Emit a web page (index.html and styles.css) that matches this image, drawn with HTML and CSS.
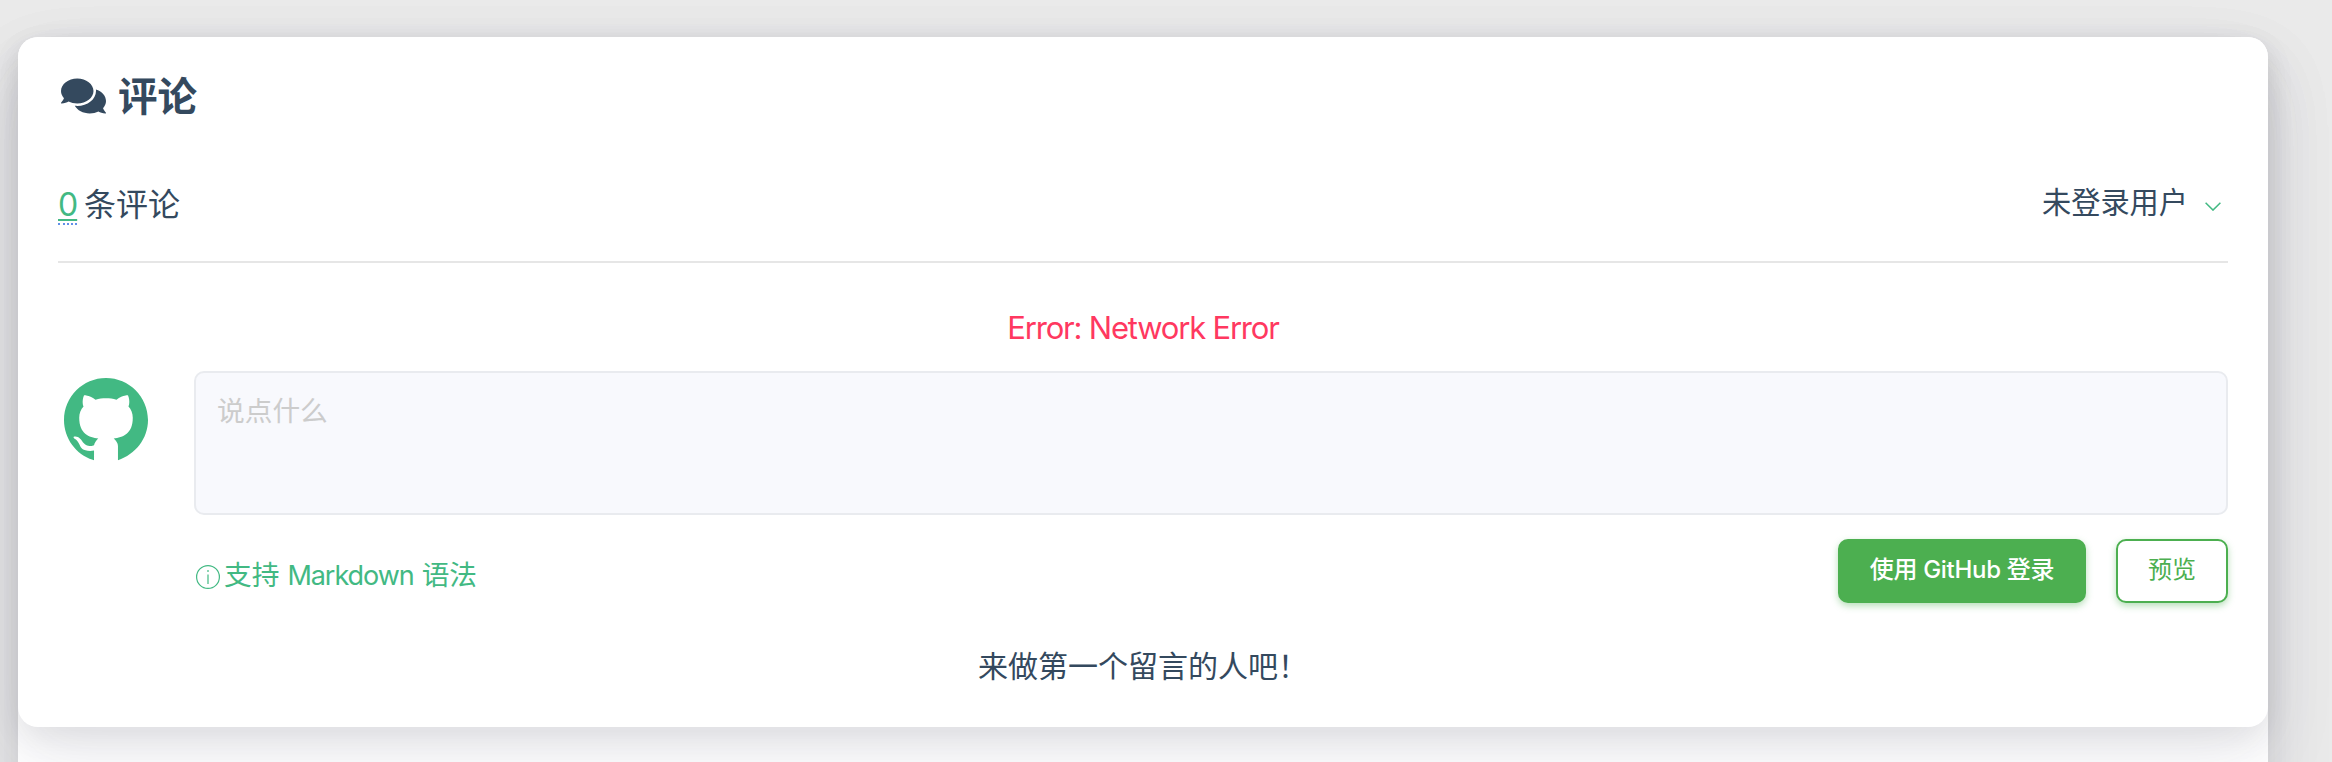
FILE: index.html
```html
<!DOCTYPE html>
<html lang="zh-CN">
<head>
<meta charset="utf-8">
<title>评论</title>
<link rel="stylesheet" href="styles.css">
</head>
<body>
<div class="page">
<main class="article">
  <section class="card">
    <h2 class="title">
      <svg class="title-icon" viewBox="0 0 576 512"><path d="M416 192c0-88.400-93.100-160-208-160S0 103.600 0 192c0 34.300 14.100 65.900 38 92-13.400 30.200-35.500 54.200-35.800 54.500-2.200 2.300-2.800 5.700-1.500 8.700S4.800 352 8 352c36.600 0 66.900-12.300 88.700-25 32.200 15.700 70.300 25 111.300 25 114.900 0 208-71.600 208-160zm122 220c23.900-26 38-57.700 38-92 0-66.900-53.500-124.200-129.300-148.100.9 6.600 1.300 13.300 1.300 20.100 0 105.900-107.700 192-240 192-10.800 0-21.300-.8-31.700-1.900C207.800 439.600 281.800 480 368 480c41 0 79.100-9.200 111.300-25 21.800 12.700 52.100 25 88.700 25 3.200 0 6.100-1.900 7.300-4.800 1.300-2.900.7-6.300-1.500-8.700-.3-.3-22.400-24.200-35.800-54.500z"/></svg>
      <span class="title-text">评论</span>
    </h2>
    <div class="meta">
      <div class="counts"><a class="count">0</a><span>条评论</span></div>
      <div class="user">
        <span class="user-name">未登录用户</span>
        <svg class="arrow" viewBox="0 0 16 9"><path d="M.6.7 8 8.100 15.400.7"/></svg>
      </div>
    </div>
    <div class="error">Error: Network Error</div>
    <div class="editor">
      <svg class="avatar" viewBox="0 0 16 16"><path d="M8 0C3.580 0 0 3.580 0 8c0 3.540 2.290 6.530 5.470 7.590l.25.060V13.830c-2.030.27-2.550-.59-2.710-1.040-.09-.23-.48-.94-.82-1.130-.28-.15-.68-.52-.01-.53.63-.01 1.080.58 1.230.82.72 1.210 1.850 1.080 2.310.87.070-.52.590-1.080.820-1.280-1.780-.2-3.640-.89-3.640-3.950 0-.87.310-1.590.82-2.150-.08-.2-.36-1.020.08-2.120 0 0 .67-.21 2.200.82.64-.18 1.320-.27 2-.27s1.360.09 2 .27c1.530-1.040 2.200-.82 2.200-.82.44 1.100.16 1.920.08 2.120.51.56.82 1.270.82 2.150 0 3.070-1.870 3.750-3.640 3.950.29.25.82.73.82 1.480V15.650C13.600 14.560 16 11.540 16 8c0-4.420-3.580-8-8-8z"/></svg>
      <div class="form">
        <textarea class="input" placeholder="说点什么"></textarea>
        <div class="controls">
          <a class="markdown">
            <svg class="info" viewBox="0 0 24 24"><circle cx="12" cy="12" r="11.400"/><path d="M12 9.500V19M12 5v2"/></svg>
            <span class="markdown-text"><span>支持</span><span class="markdown-word">Markdown</span><span>语法</span></span>
          </a>
          <div class="buttons">
            <button class="btn btn-login">使用 GitHub 登录</button>
            <button class="btn btn-preview">预览</button>
          </div>
        </div>
      </div>
    </div>
    <p class="empty">来做第一个留言的人吧！</p>
  </section>
</main>
</div>
</body>
</html>
```
FILE: styles.css
```css
* { box-sizing: border-box; }
html, body { height: 100%; }
body {
  margin: 0;
  background: #eaeaea;
  color: #34495e;
  font-family: Inter, "Noto Sans CJK SC", sans-serif;
}
.page { height: 762px; padding: 37px 64px 0 18px; overflow: hidden; }
.article, .card {
  border-radius: 20px;
  background: #fff;
  box-shadow: 0 30px 70px rgba(50, 50, 93, .1), 0 10px 30px rgba(0, 0, 0, .07);
}
.article { height: 900px; }
.card { height: 690px; padding: 30px 40px 0; }
.title {
  display: flex;
  align-items: center;
  height: 60px;
  margin: 0;
  padding-left: 3px;
  font-size: 39.500px;
  font-weight: 700;
}
.title-icon { width: 45px; height: 40px; margin: 0 12px 2px 0; fill: #34495e; }
.title-text { line-height: 60px; }
.meta {
  display: flex;
  justify-content: space-between;
  height: 136px;
  border-bottom: 2px solid #e6e6e6;
}
.counts { display: flex; gap: 7px; padding-top: 54px; font-size: 32px; line-height: 48px; }
.count {
  height: 44px;
  width: 19px;
  border-bottom: 2px dotted #6190e8;
  color: #42b983;
  line-height: 48px;
  letter-spacing: -1px;
  text-decoration: underline;
  text-decoration-thickness: 2px;
  text-underline-offset: 3px;
  text-decoration-skip-ink: none;
}
.user { display: flex; align-items: center; gap: 17px; height: 48px; margin-top: 49px; padding-right: 7px; font-size: 29.200px; }
.arrow { width: 16px; height: 9px; margin-top: 13px; fill: none; stroke: #42b983; stroke-width: 1.500; }
.error {
  margin-top: 40px;
  height: 50px;
  color: #ff3860;
  font-size: 31px;
  line-height: 50px;
  letter-spacing: -1.200px;
  text-align: center;
}
.editor { display: flex; gap: 46px; margin-top: 18px; padding-left: 6px; }
.avatar { flex: none; width: 84px; height: 84px; margin-top: 7px; fill: #42b983; }
.form { flex: 1; }
.input {
  display: block;
  width: 100%;
  height: 144px;
  padding: 16px 21px;
  border: 2px solid #e9ebef;
  border-radius: 10px;
  background: #f8f9fd;
  font: 27.700px/44px Inter, "Noto Sans CJK SC", sans-serif;
  resize: none;
}
.input::placeholder { color: #ccc; opacity: 1; }
.controls { display: flex; justify-content: space-between; height: 64px; margin-top: 24px; }
.markdown { display: flex; align-items: center; gap: 4px; height: 68px; padding-left: 2px; color: #42b983; font-size: 27.700px; }
.info { width: 24px; height: 24px; margin-top: 7px; fill: none; stroke: #42b983; stroke-width: 1.200; }
.markdown-text { display: flex; align-items: baseline; gap: 8px; }
.markdown-word { font-size: 27px; letter-spacing: -1.050px; }
.buttons { display: flex; gap: 30px; }
.btn {
  height: 64px;
  padding: 0 0 2px;
  border: 2px solid #4caf50;
  border-radius: 10px;
  box-shadow: 0 3px 7px rgba(76, 175, 80, .4);
  font: 24px/1 Inter, "Noto Sans CJK SC", sans-serif;
}
.btn-login { width: 248px; background: #4caf50; color: #fff; font-weight: 500; letter-spacing: -.3px; }
.btn-preview { width: 112px; background: #fff; color: #4caf50; }
.empty { margin: 39px 0 0; font-size: 30px; line-height: 48px; text-align: center; }
```
